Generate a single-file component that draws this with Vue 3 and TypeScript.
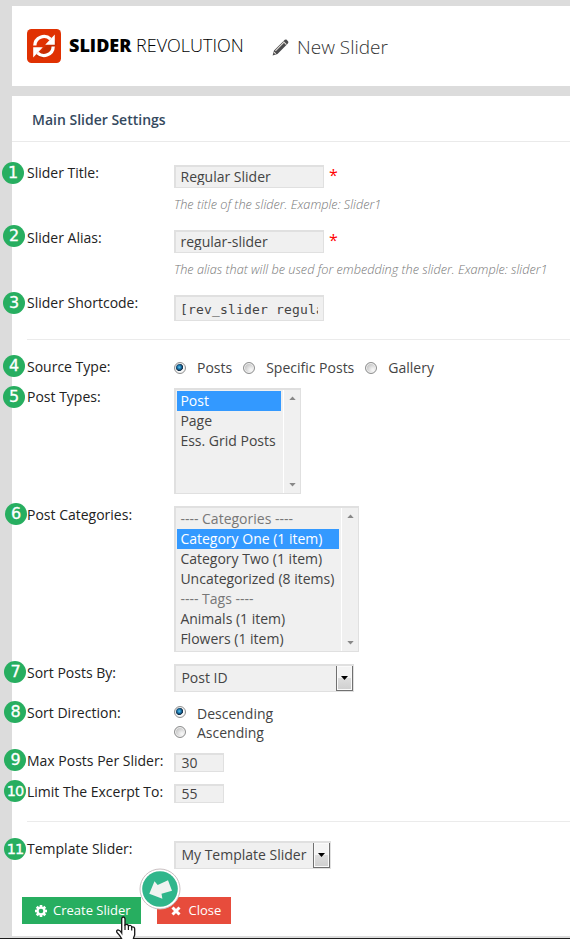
<script setup lang="ts">
interface ListOption {
  text: string
  group?: boolean
  selected?: boolean
}

const postTypes: ListOption[] = [
  { text: 'Post', selected: true },
  { text: 'Page' },
  { text: 'Ess. Grid Posts' },
]

const categories: ListOption[] = [
  { text: '---- Categories ----', group: true },
  { text: 'Category One (1 item)', selected: true },
  { text: 'Category Two (1 item)' },
  { text: 'Uncategorized (8 items)' },
  { text: '---- Tags ----', group: true },
  { text: 'Animals (1 item)' },
  { text: 'Flowers (1 item)' },
]
</script>

<template>
  <div class="page">
    <header class="top">
      <svg class="logo" viewBox="0 0 34 34">
        <rect width="34" height="34" rx="4.5" fill="#e03102" />
        <path d="M9 27 27 9l3 6-14 15z" fill="#b92a04" opacity=".6" />
        <path d="M7.800 16.500a9.200 9.200 0 0 1 15.700-6.300M26.200 17.500a9.200 9.200 0 0 1-15.700 6.300" fill="none" stroke="#fff" stroke-width="3.300" />
        <path d="M27.800 5.600v10.100H18.200zM6.200 28.400V18.300h9.600z" fill="#fff" />
      </svg>
      <div class="brand"><b>SLIDER</b> <span>REVOLUTION</span></div>
      <svg class="pencil" viewBox="0 0 17 17">
        <path d="M.6 16.400 2 11.500 11.800 1.700Q13 .3 14.400 .6L16.200 2.400Q16.900 3.700 15.400 5L5.500 15z" fill="#4b4b4d" />
        <path d="M3.400 11.800 11.500 3.700M2 13.200l1.700 1.700M11.400 2.700l3 3" stroke="#e4e0da" stroke-width="1.1" />
      </svg>
      <h1>New Slider</h1>
    </header>

    <main class="panel">
      <h2>Main Slider Settings</h2>
      <form class="form" @submit.prevent>
        <div class="row title">
          <i class="badge first">1</i><label>Slider Title:</label>
          <div class="ctl">
            <div class="line"><div class="box text"><span>Regular Slider</span></div><em class="req">*</em></div>
            <p class="hint">The title of the slider. Example: Slider1</p>
          </div>
        </div>
        <div class="row alias">
          <i class="badge second">2</i><label>Slider Alias:</label>
          <div class="ctl">
            <div class="line"><div class="box text"><span>regular-slider</span></div><em class="req">*</em></div>
            <p class="hint">The alias that will be used for embedding the slider. Example: slider1</p>
          </div>
        </div>
        <div class="row code-row">
          <i class="badge third">3</i><label>Slider Shortcode:</label>
          <div class="ctl"><div class="box code"><span>[rev_slider regular-slider]</span></div></div>
        </div>
        <hr />
        <div class="row source">
          <i class="badge">4</i><label>Source Type:</label>
          <div class="radios">
            <i class="radio on"></i><span class="r1">Posts</span>
            <i class="radio"></i><span class="r2">Specific Posts</span>
            <i class="radio"></i><span>Gallery</span>
          </div>
        </div>
        <div class="row types">
          <i class="badge third">5</i><label>Post Types:</label>
          <div class="ctl list-ctl">
            <div class="box list short">
              <ul>
                <li v-for="o in postTypes" :key="o.text" :class="{ sel: o.selected, group: o.group }">{{ o.text }}</li>
              </ul>
              <div class="scroll">
                <svg viewBox="0 0 8 5"><path d="M0 5 4 .5 8 5z" /></svg>
                <svg viewBox="0 0 8 5"><path d="M0 0h8L4 4.500z" /></svg>
              </div>
            </div>
          </div>
        </div>
        <div class="row cats">
          <i class="badge sixth">6</i><label>Post Categories:</label>
          <div class="ctl list-ctl">
            <div class="box list tall">
              <ul>
                <li v-for="o in categories" :key="o.text" :class="{ sel: o.selected, group: o.group }">{{ o.text }}</li>
              </ul>
              <div class="scroll">
                <svg viewBox="0 0 8 5"><path d="M0 5 4 .5 8 5z" /></svg>
                <svg viewBox="0 0 8 5"><path d="M0 0h8L4 4.500z" /></svg>
              </div>
            </div>
          </div>
        </div>
        <div class="row sortby">
          <i class="badge later">7</i><label>Sort Posts By:</label>
          <div class="ctl list-ctl">
            <div class="box select wide"><span>Post ID</span><b class="drop"><svg viewBox="0 0 7 4"><path d="M0 0h7L3.500 4z" /></svg></b></div>
          </div>
        </div>
        <div class="row dir">
          <i class="badge later">8</i><label>Sort Direction:</label>
          <div class="ctl stack">
            <div class="opt"><i class="radio on"></i><span class="down">Descending</span></div>
            <div class="opt"><i class="radio"></i><span>Ascending</span></div>
          </div>
        </div>
        <div class="row max">
          <i class="badge later">9</i><label>Max Posts Per Slider:</label>
          <div class="ctl"><div class="box num"><span>30</span></div></div>
        </div>
        <div class="row limit">
          <i class="badge later two">10</i><label>Limit The Excerpt To:</label>
          <div class="ctl"><div class="box num"><span>55</span></div></div>
        </div>
        <hr />
        <div class="row template">
          <i class="badge later two last">11</i><label>Template Slider:</label>
          <div class="ctl">
            <div class="box select narrow"><span>My Template Slider</span><b class="drop"><svg viewBox="0 0 7 4"><path d="M0 0h7L3.500 4z" /></svg></b></div>
          </div>
        </div>
      </form>

      <div class="actions">
        <button class="create" type="button">
          <svg viewBox="0 0 12 12">
            <g fill="#fff">
              <rect x="4.700" width="2.600" height="12" />
              <rect x="4.700" width="2.600" height="12" transform="rotate(45 6 6)" />
              <rect x="4.700" width="2.600" height="12" transform="rotate(90 6 6)" />
              <rect x="4.700" width="2.600" height="12" transform="rotate(135 6 6)" />
              <circle cx="6" cy="6" r="4.500" />
            </g>
            <circle cx="6" cy="6" r="2.300" fill="#27ae60" />
          </svg>
          <span>Create Slider</span>
        </button>
        <button class="close" type="button">
          <svg viewBox="0 0 10 10"><path d="M1.500 1.500l7 7M8.500 1.500l-7 7" stroke="#fff" stroke-width="3" /></svg>
          <span>Close</span>
        </button>
        <svg class="pointer" viewBox="0 0 42 42">
          <circle cx="21" cy="21" r="20" fill="#fff" stroke="#c9bfc1" stroke-width="1" />
          <circle cx="21" cy="21" r="17.800" fill="#30b68b" />
          <path d="M10.300 25.800 15.500 13.200 18.700 17.100 29 12.300 33 22.800 22.500 25.800 23.400 30.800z" fill="#f0f3f1" />
        </svg>
        <svg class="hand" viewBox="0 0 22 24">
          <path d="M6.700 17V2.700Q7 1 8.300 1T10 2.700V9Q12.500 7.600 13.500 9.800 16 8.600 16.800 11 19.700 10.600 19.700 13v6q-1 2-1.600 5H7.400Q5 19.400 2 16.500 1 14.300 3 13.900 5 14 6.700 17z" fill="#fff" stroke="#161616" stroke-width="1.300" />
          <path d="M10 8.500V14M13.400 9.800V14M16.700 11v3.500" stroke="#161616" stroke-width="1.200" />
        </svg>
      </div>
    </main>
    <footer class="edge"></footer>
  </div>
</template>

<style>
body {
  background: #ddd;
  overflow: hidden;
}
</style>

<style scoped>
* {
  box-sizing: border-box;
}
.page {
  width: 570px;
  height: 939px;
  padding: 6px 0 0 12px;
  overflow: hidden;
  background: #dcdcdc;
  font: 14px/20px 'Open Sans', sans-serif;
  color: #222;
}
.top {
  display: flex;
  align-items: flex-start;
  height: 80px;
  padding: 23px 0 0 15px;
  background: #fff;
}
.logo {
  width: 34px;
  height: 34px;
}
.brand {
  width: 174px;
  margin: 4px 0 0 8px;
  font-size: 18px;
  line-height: 24px;
  color: #000;
  white-space: nowrap;
}
.brand b {
  font-weight: 800;
}
.brand span {
  font-weight: 300;
}
.pencil {
  width: 17px;
  height: 17px;
  margin: 10px 0 0 29px;
}
h1 {
  margin: 5px 0 0 8px;
  font-size: 19px;
  line-height: 26px;
  font-weight: 300;
  color: #333;
}
.panel {
  height: 840px;
  margin-top: 10px;
  background: #fff;
}
h2 {
  height: 46px;
  margin: 0;
  padding: 14px 0 0 20px;
  border-bottom: 1px solid #eaeaea;
  font-size: 14px;
  line-height: 20px;
  font-weight: 600;
  color: #34495e;
}
.form {
  padding: 21px 0 0 15px;
}
.row {
  position: relative;
  display: flex;
  align-items: flex-start;
}
label {
  width: 147px;
  flex: none;
  white-space: nowrap;
}
.title,
.alias {
  height: 65px;
}
.code-row {
  height: 46px;
}
.source {
  height: 30px;
}
.source label {
  line-height: 19px;
}
.types {
  height: 118px;
}
.cats {
  height: 158px;
}
.sortby {
  height: 40px;
}
.dir {
  height: 48px;
}
.max {
  height: 31px;
}
.limit {
  height: 39px;
}
.template {
  height: 58px;
}
hr {
  height: 1px;
  margin: 0 0 17px;
  border: 0;
  background: #ebebeb;
}
.badge {
  position: absolute;
  left: -24px;
  top: -2px;
  width: 22px;
  height: 22px;
  border-radius: 50%;
  background: #27ae60;
  color: #fff;
  font: 16px/22px 'DejaVu Sans', sans-serif;
  -webkit-text-stroke: 0.3px #fff;
  text-align: center;
}
.first {
  left: -25px;
  top: -1px;
}
.second {
  top: -3px;
}
.third {
  top: -1px;
}
.sixth {
  left: -22px;
}
.later {
  left: -23px;
  padding-left: 1px;
}
.two {
  padding-left: 0;
  font-size: 14.5px;
  letter-spacing: -1px;
}
.last {
  top: -1px;
}
.ctl {
  padding-top: 2px;
}
.list-ctl {
  padding-top: 1px;
}
.line {
  display: flex;
}
.box {
  border: 2px solid #e0e0e0;
  border-width: 2px 1px 1px 2px;
  background: #f0f0f0;
  color: #444;
  white-space: nowrap;
  overflow: hidden;
}
.text {
  width: 150px;
  height: 23px;
  padding: 0 4px 0 4.5px;
}
.text span {
  display: block;
  height: 18px;
  line-height: 20px;
  overflow: hidden;
}
.req {
  margin: 0 0 0 5px;
  font-style: normal;
  font-size: 16px;
  line-height: 20px;
  color: #f00;
}
.hint {
  margin: 7px 0 0;
  font-size: 12.7px;
  line-height: 18px;
  font-weight: 300;
  font-style: italic;
  color: #777;
  white-space: nowrap;
}
.code {
  width: 150px;
  height: 26px;
  padding: 0 5px 0 4px;
}
.code span {
  display: block;
  overflow: hidden;
  font: 13px/25px 'DejaVu Sans Mono', monospace;
  letter-spacing: 0.17px;
}
.radios {
  display: flex;
  align-items: center;
  padding-top: 1px;
  color: #444;
}
.radio {
  flex: none;
  width: 12px;
  height: 12px;
  margin-right: 11px;
  border: 1px solid #8e8f8f;
  border-radius: 50%;
  background: radial-gradient(circle at 70% 70%, #f4f4f4 10%, #c9c9c9 65%);
  box-shadow: inset 0 0 0 1px #f2f2f2;
}
.on {
  background: radial-gradient(circle at 43% 42%, #66c8ee 0, #1a78b0 22%, #102b45 42%, #fafafa 50%);
}
.r1 {
  margin-right: 11px;
}
.r2 {
  margin-right: 11px;
}
.list {
  display: flex;
}
.short {
  width: 127px;
  height: 106px;
}
.tall {
  width: 185px;
  height: 146px;
}
ul {
  flex: 1;
  margin: 0;
  padding: 1px 2px 0 1px;
  list-style: none;
}
li {
  height: 20px;
  padding-left: 3.4px;
}
.group {
  color: #777;
}
.sel {
  background: #3399ff;
  color: #fff;
}
.scroll {
  display: flex;
  flex-direction: column;
  justify-content: space-between;
  align-items: center;
  width: 17px;
  padding: 6px 0;
  border-left: 1px solid #fff;
}
.scroll svg {
  width: 7px;
  height: 4px;
  fill: #888;
}
.select {
  display: flex;
  justify-content: space-between;
  height: 28px;
  padding-left: 5.4px;
  line-height: 23px;
}
.wide {
  width: 180px;
}
.narrow {
  width: 157px;
}
.drop {
  display: flex;
  flex: none;
  align-items: center;
  justify-content: center;
  width: 17px;
  height: 26px;
  margin-top: -1px;
  border: 1px solid #707070;
  background: linear-gradient(#f4f4f4 48%, #dedede 50%, #cfcfcf);
  box-shadow: inset 0 0 0 1px #fafafa;
}
.drop svg {
  width: 7px;
  height: 4px;
}
.stack {
  padding-top: 0;
}
.opt {
  display: flex;
  height: 20px;
  align-items: center;
  color: #444;
}
.opt .radio {
  margin-top: -2px;
}
.down {
  padding-top: 2px;
}
.num {
  width: 50px;
  height: 19px;
  padding-left: 5.4px;
}
.num span {
  display: block;
  line-height: 15px;
}
.actions {
  position: relative;
  display: flex;
  gap: 16px;
  padding-left: 10px;
}
button {
  display: flex;
  align-items: center;
  height: 27px;
  padding: 0;
  border: 0;
  font: 13px/26px 'Open Sans', sans-serif;
  color: #fff;
}
button span {
  padding-bottom: 2px;
}
.create {
  width: 119px;
  padding-left: 13px;
  gap: 6px;
  background: #27ae60;
}
.create svg {
  width: 12px;
  height: 12px;
}
.close {
  width: 74px;
  padding-left: 14px;
  gap: 7.5px;
  background: #e74c3c;
}
.close svg {
  width: 10px;
  height: 10px;
}
.pointer {
  position: absolute;
  left: 127px;
  top: -29px;
  width: 42px;
  height: 42px;
}
.hand {
  position: absolute;
  left: 103px;
  top: 19px;
  width: 22px;
  height: 24px;
}
.edge {
  height: 1px;
  margin: 2px 0 0 -12px;
  background: #1c1c1c;
}
</style>
